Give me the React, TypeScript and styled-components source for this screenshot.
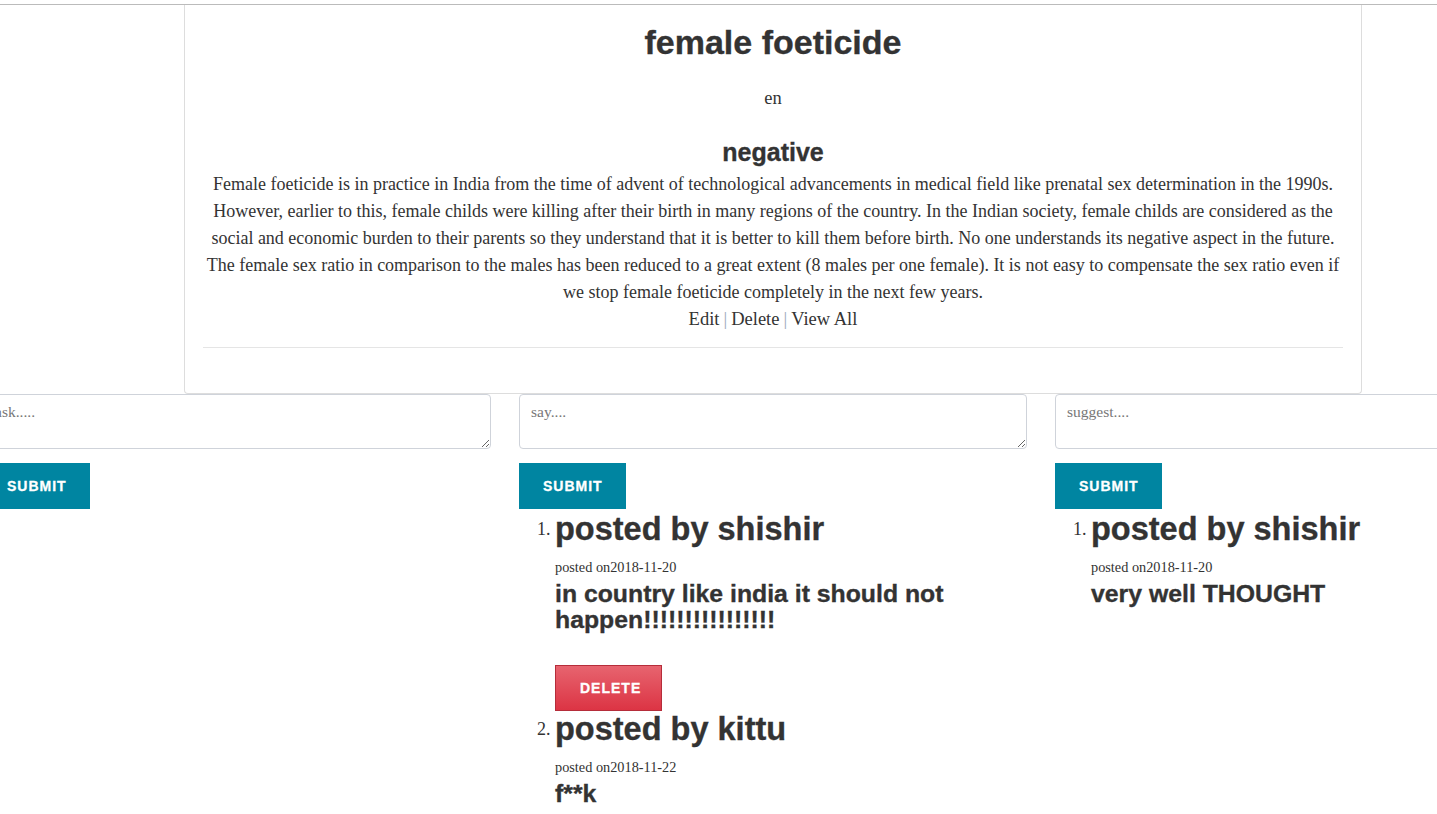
import React from 'react'
import styled, { createGlobalStyle } from 'styled-components'

const GlobalStyle = createGlobalStyle`
  html, body {
    margin: 0;
    padding: 0;
    background: #fff;
    overflow-x: hidden;
  }
  body {
    color: #333;
    font-family: 'Liberation Serif', 'Times New Roman', serif;
    font-size: 18.5px;
  }
`

const heavy = `
  font-family: 'Liberation Sans', Arial, sans-serif;
  font-weight: 700;
  -webkit-text-stroke: 0.35px #333;
`

const TopRule = styled.div`
  height: 4px;
  border-bottom: 1px solid #bbb;
`

const Card = styled.div`
  width: 1178px;
  box-sizing: border-box;
  margin: 0 0 0 184px;
  padding: 17px 18px 45px;
  border: 1px solid #ddd;
  border-top: none;
  border-radius: 0 0 4px 4px;
  text-align: center;
`

const Title = styled.h1`
  margin: 0;
  ${heavy}
  font-size: 34px;
  line-height: 40px;
  color: #333;
`

const Lang = styled.p`
  margin: 25px 0 0;
  line-height: 22px;
`

const Mood = styled.h3`
  margin: 29px 0 0;
  ${heavy}
  font-size: 25px;
  line-height: 28px;
`

const Body = styled.p`
  margin: 5px 0 0;
  font-size: 18px;
  line-height: 27px;
`

const Actions = styled.div`
  line-height: 27px;
`

const ActionLink = styled.a`
  color: #333;
  text-decoration: none;
  cursor: pointer;
`

const Sep = styled.span`
  color: #9aa8b8;
  margin: 0 4px;
`

const Rule = styled.hr`
  margin: 14px 0 0;
  border: none;
  border-top: 1px solid #e5e5e5;
`

const Row = styled.div`
  display: flex;
  width: 1608px;
  margin-left: -31px;
`

const Col = styled.div`
  width: 536px;
  box-sizing: border-box;
  padding: 0 14px;
`

const Box = styled.textarea`
  display: block;
  width: 100%;
  height: 55px;
  box-sizing: border-box;
  padding: 8px 11px;
  border: 1px solid #cfd3da;
  border-radius: 4px;
  font-family: 'Liberation Serif', 'Times New Roman', serif;
  font-size: 15.5px;
  color: #333;
  &::placeholder {
    color: #777;
  }
`

const Button = styled.button<{ $danger?: boolean }>`
  display: block;
  box-sizing: border-box;
  height: 46px;
  padding: 0 24px;
  border: ${(p) => (p.$danger ? '1px solid #b52d3a' : 'none')};
  background: ${(p) => (p.$danger ? 'linear-gradient(#e7646f, #dc3444)' : '#0085a1')};
  color: #fff;
  font-family: 'Liberation Sans', Arial, sans-serif;
  font-weight: 700;
  -webkit-text-stroke: 0.3px #fff;
  font-size: 14px;
  letter-spacing: 1px;
  text-transform: uppercase;
  cursor: pointer;
`

const SubmitButton = styled(Button)`
  margin-top: 14px;
  width: 107px;
`

const DeleteButton = styled(Button)`
  margin-top: 32px;
  width: 107px;
`

const List = styled.ol`
  margin: 2px 0 0;
  padding-left: 36px;
`

const Item = styled.li`
  font-size: 18px;
  line-height: 36px;
`

const Author = styled.h2`
  display: inline-block;
  margin: 0;
  ${heavy}
  font-size: 32.5px;
  line-height: 36px;
  vertical-align: top;
`

const Posted = styled.p`
  margin: 10px 0 0;
  font-size: 14.3px;
  line-height: 20px;
`

const Message = styled.h3`
  margin: 4px 0 0;
  ${heavy}
  font-size: 24.8px;
  line-height: 26px;
`

type Post = { author: string; date: string; text: string; canDelete?: boolean }

const says: Post[] = [
  {
    author: 'shishir',
    date: '2018-11-20',
    text: 'in country like india it should not happen!!!!!!!!!!!!!!!!',
    canDelete: true,
  },
  { author: 'kittu', date: '2018-11-22', text: 'f**k' },
]

const suggests: Post[] = [{ author: 'shishir', date: '2018-11-20', text: 'very well THOUGHT' }]

const Posts: React.FC<{ items: Post[] }> = ({ items }) => (
  <List>
    {items.map((p, i) => (
      <Item key={i}>
        <Author>posted by {p.author}</Author>
        <Posted>posted on{p.date}</Posted>
        <Message>{p.text}</Message>
        {p.canDelete && <DeleteButton $danger>Delete</DeleteButton>}
      </Item>
    ))}
  </List>
)

export default function App() {
  return (
    <>
      <GlobalStyle />
      <TopRule />
      <Card>
        <Title>female foeticide</Title>
        <Lang>en</Lang>
        <Mood>negative</Mood>
        <Body>
          Female foeticide is in practice in India from the time of advent of technological advancements in medical
          field like prenatal sex determination in the 1990s. However, earlier to this, female childs were killing after
          their birth in many regions of the country. In the Indian society, female childs are considered as the social
          and economic burden to their parents so they understand that it is better to kill them before birth. No one
          understands its negative aspect in the future. The female sex ratio in comparison to the males has been
          reduced to a great extent (8 males per one female). It is not easy to compensate the sex ratio even if we stop
          female foeticide completely in the next few years.
        </Body>
        <Actions>
          <ActionLink>Edit</ActionLink>
          <Sep>|</Sep>
          <ActionLink>Delete</ActionLink>
          <Sep>|</Sep>
          <ActionLink>View All</ActionLink>
        </Actions>
        <Rule />
      </Card>
      <Row>
        <Col>
          <Box placeholder="ask....." />
          <SubmitButton>Submit</SubmitButton>
        </Col>
        <Col>
          <Box placeholder="say...." />
          <SubmitButton>Submit</SubmitButton>
          <Posts items={says} />
        </Col>
        <Col>
          <Box placeholder="suggest...." />
          <SubmitButton>Submit</SubmitButton>
          <Posts items={suggests} />
        </Col>
      </Row>
    </>
  )
}
